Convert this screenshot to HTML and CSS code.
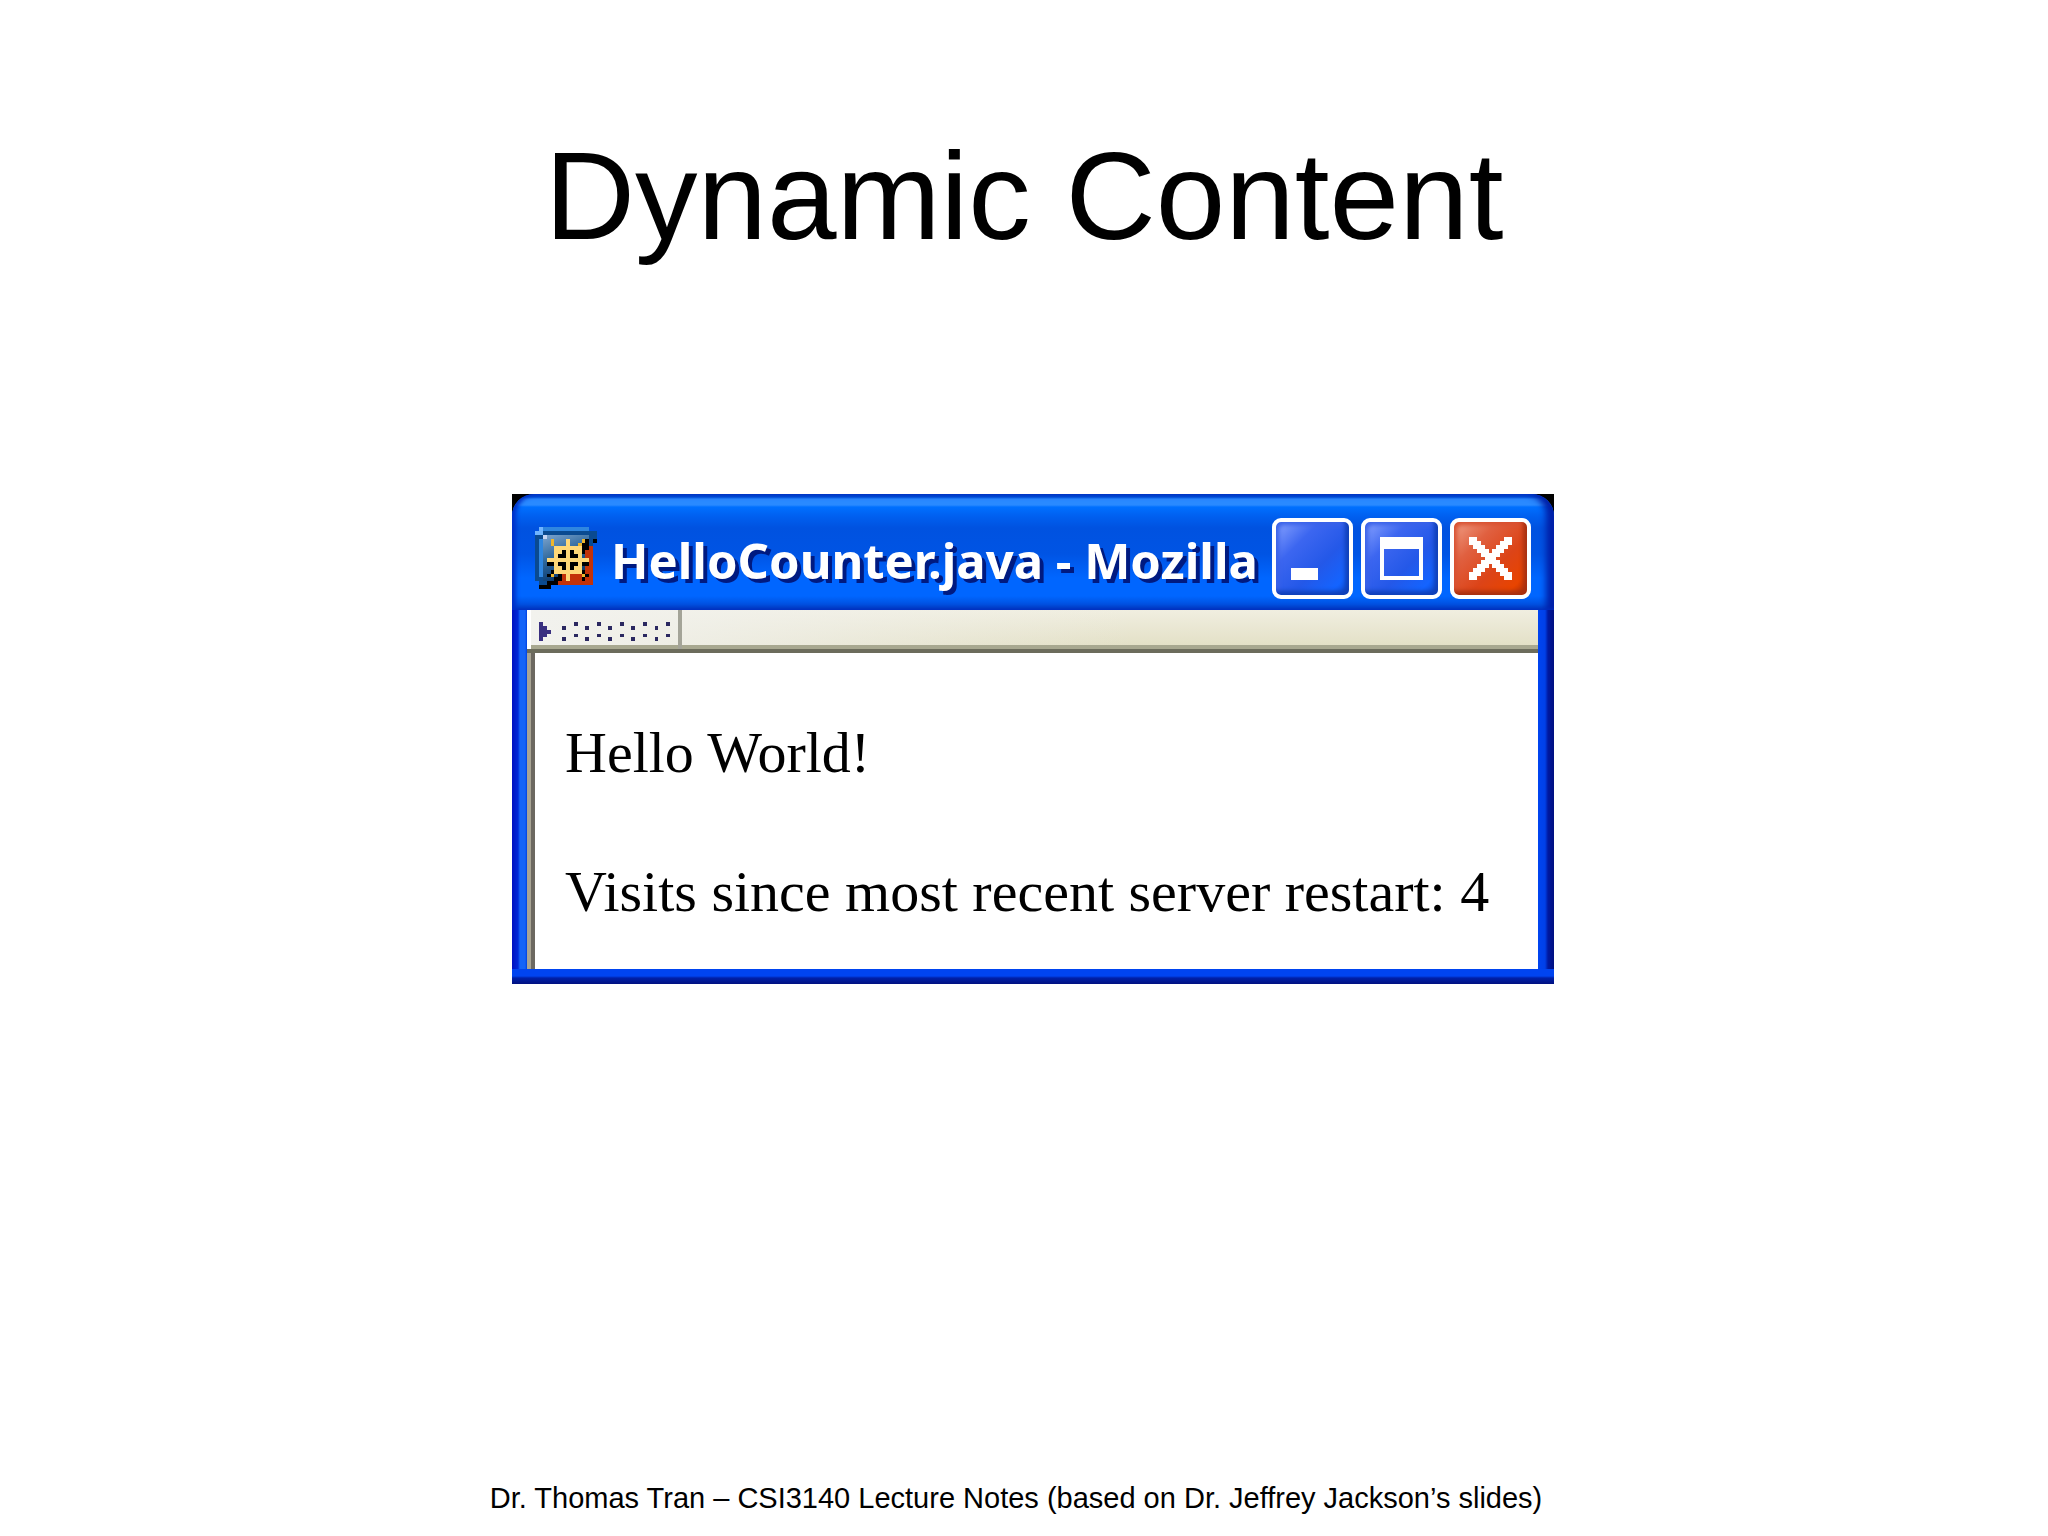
FILE: index.html
```html
<!DOCTYPE html>
<html lang="en">
<head>
    <meta charset="utf-8">
    <meta name="viewport" content="width=device-width, initial-scale=1">
    <title>Dynamic Content</title>
    <link rel="stylesheet" href="styles.css">
</head>
<body>
<div class="slide">
    <h1 class="slide-title">Dynamic Content</h1>

    <main class="slide-body">
        <section class="window">
            <header class="titlebar">
                <svg class="app-icon" viewBox="0 0 16 16" shape-rendering="crispEdges" aria-hidden="true">
                    <defs>
                        <linearGradient id="tile" x1="0" y1="0" x2="0.4" y2="1">
                            <stop offset="0" stop-color="#7fa6d0"/>
                            <stop offset="0.5" stop-color="#2f689c"/>
                            <stop offset="1" stop-color="#06356c"/>
                        </linearGradient>
                    </defs>
                    <path fill="#0a4a90" d="M1 0h13v1h2v2h-1v11h-1v1H1v-1H0V1h1z"/>
                    <path fill="url(#tile)" d="M2 2h12v12H2z"/>
                    <path fill="#2f86e0" d="M2 0h12v1H2zM1 3h1v10H1z"/>
                    <path fill="#6fb4ff" d="M0 1h2v1H0zM1 0h1v1H1z"/>
                    <path fill="#c6d6f4" d="M2 2h1v1H2z"/>
                    <path fill="#c33208" d="M13 5h2v10H5v-2h2v-1h5v-1h1z"/>
                    <path fill="#000" d="M15 3h1v1h-1zM13 3h1v1h-1zM12 4h2v1h-2zM12 5h2v1h-2zM12 6h1v1h-1zM3 9h2v1H3zM12 9h2v1h-2zM4 11h1v1H4zM3 12h1v1H3zM6 12h1v1H6zM5 13h2v1H5zM3 14h3v1H3zM1 15h3v1H1zM12 11h1v1h-1zM13 12h1v1h-1zM12 13h1v1h-1z"/>
                    <path fill="#ffd878" d="M5 5h7v7H5zM8 3h1v11H8zM3 8h11v1H3z"/>
                    <path fill="#eeb62c" d="M4 3h1v1H4zM4 4h1v1H4zM12 3h1v1h-1zM11 4h1v1h-1zM4 12h1v1H4zM12 12h1v1h-1z"/>
                    <path fill="#000" d="M7 6h1v2H6V7h1zM9 6h1v1h1v1H9zM6 9h2v2H7v-1H6zM9 9h2v1h-1v1H9z"/>
                </svg>
                <h2 class="window-title">HelloCounter.java - Mozilla</h2>
                <div class="controls">
                    <button class="control" type="button" aria-label="Minimize">
                        <svg viewBox="0 0 19 19" shape-rendering="crispEdges" aria-hidden="true">
                            <path fill="#fff" d="M4 12h7v3H4z"/>
                        </svg>
                    </button>
                    <button class="control" type="button" aria-label="Maximize">
                        <svg viewBox="0 0 19 19" shape-rendering="crispEdges" aria-hidden="true">
                            <path fill="#fff" fill-rule="evenodd" d="M4 4h11v11H4zM5 7v7h9V7z"/>
                        </svg>
                    </button>
                    <button class="control close" type="button" aria-label="Close">
                        <svg viewBox="0 0 19 19" shape-rendering="crispEdges" aria-hidden="true">
                            <path fill="#fff" d="M4 4h2v1h1v1h1v1h1v1h1V7h1V6h1V5h1V4h2v2h-1v1h-1v1h-1v1h-1v1h1v1h1v1h1v1h1v2h-2v-1h-1v-1h-1v-1h-1v-1H9v1H8v1H7v1H6v1H4v-2h1v-1h1v-1h1v-1h1V9H7V8H6V7H5V6H4z"/>
                        </svg>
                    </button>
                </div>
            </header>
            <div class="toolbar">
                <div class="grippy">
                    <svg viewBox="0 0 34 5" shape-rendering="crispEdges" aria-hidden="true">
                        <path fill="#3a3080" d="M0 0h1v5H0zM1 1h1v3H1zM2 2h1v1H2z"/>
                        <path fill="#2b2860" d="M6 1h1v1H6zM6 4h1v1H6zM9 0h1v1H9zM9 3h1v1H9zM12 1h1v1h-1zM12 4h1v1h-1zM15 0h1v1h-1zM15 3h1v1h-1zM18 1h1v1h-1zM18 4h1v1h-1zM21 0h1v1h-1zM21 3h1v1h-1zM24 1h1v1h-1zM24 4h1v1h-1zM27 0h1v1h-1zM27 3h1v1h-1zM30 1h1v1h-1zM30 4h1v1h-1zM33 0h1v1h-1zM33 3h1v1h-1z"/>
                    </svg>
                </div>
            </div>
            <div class="page">
                <p>Hello World!</p>
                <p>Visits since most recent server restart: 4</p>
            </div>
        </section>
    </main>

    <footer class="slide-footer">Dr. Thomas Tran – CSI3140 Lecture Notes (based on Dr. Jeffrey Jackson’s slides)</footer>
</div>
</body>
</html>
```
FILE: styles.css
```css
* {
    box-sizing: border-box;
}

body {
    margin: 0;
    background: #fff;
    color: #000;
    font-family: "Liberation Sans", Arial, sans-serif;
}

.slide {
    min-height: 100vh;
    display: flex;
    flex-direction: column;
    align-items: center;
    padding: 124px 16px 20px;
}

.slide-title {
    margin: 0;
    font-size: 125px;
    font-weight: normal;
    line-height: 144px;
}

.slide-body {
    flex: 1;
    width: 100%;
    padding: 226px 0 0 18px;
}

/* XP style window, the side borders and black corners are painted by the background */
.window {
    max-width: 1042px;
    margin: 0 auto;
    background:
        linear-gradient(#000 24px, transparent 24px),
        linear-gradient(90deg, #0010c0 0, #0028d8 6px, #1464f8 8px, #1464f8 13px, #0040e0 15px, transparent 15px),
        linear-gradient(270deg, #001080 0, #0018a0 6px, #0040e8 9px, #0044f0 16px, transparent 16px);
}

.titlebar {
    display: flex;
    align-items: center;
    height: 116px;
    padding: 12px 23px 0;
    border-radius: 22px 22px 0 0;
    background: linear-gradient(#0050d8 0, #0058e0 3px, #2a8aff 5px, #2a8aff 11px, #0070ff 13px, #0060f0 22px, #0052e0 34px, #0054e4 60px, #0066ff 84px, #0066ff 102px, #0044cc 116px);
    box-shadow: inset 4px 0 4px #0030c8, inset -8px 0 6px #0020a8;
}

.app-icon {
    width: 62px;
    height: 62px;
    flex: none;
}

.window-title {
    flex: 1;
    margin: 0 0 0 14px;
    padding-top: 4px;
    color: #fff;
    font-family: "Noto Sans", "Trebuchet MS", sans-serif;
    font-size: 49px;
    line-height: 60px;
    white-space: nowrap;
    text-shadow: 4px 4px 0 #001a80;
}

.controls {
    display: flex;
    gap: 8px;
}

.control {
    width: 81px;
    height: 81px;
    padding: 0;
    border: 4px solid #fff;
    border-radius: 9px;
    background: linear-gradient(135deg, #8aa4ff 0, #3c66f0 30%, #2458e8 60%, #1464ff 85%, #0c48d0 100%);
    box-shadow: inset -4px -4px 4px #1040b8, inset 3px 3px 4px #3a62e8;
}

.control svg {
    display: block;
    width: 100%;
}

.close {
    background: linear-gradient(135deg, #f0a088 0, #e06040 30%, #dc4418 60%, #e84400 85%, #b02c08 100%);
    box-shadow: inset -4px -4px 4px #a83010, inset 3px 3px 4px #d85030;
}

.toolbar {
    display: flex;
    height: 43px;
    margin: 0 16px 0 15px;
    background:
        linear-gradient(90deg, #f2f2ee 0, rgba(242, 242, 238, 0) 60%),
        linear-gradient(#f0eee0, #e2dfc4);
    border-bottom: 4px solid #6c6c5c;
    box-shadow: inset 0 -4px 0 #a8a890;
}

.grippy {
    width: 155px;
    padding: 12px 0 0 8px;
    border-right: 4px solid #a4a498;
    border-left: 4px solid #fff;
}

.grippy svg {
    display: block;
    width: 131px;
}

.page {
    margin: 0 16px 0 15px;
    padding: 65px 24px 42px 38px;
    background: linear-gradient(90deg, #a8a494 4px, #6c6860 4px, #6c6860 8px, #fff 8px);
    font-family: "Liberation Serif", "Times New Roman", serif;
    font-size: 58px;
    line-height: 70px;
}

.page p {
    margin: 0;
}

.page p + p {
    margin-top: 69px;
}

.window::after {
    content: "";
    display: block;
    height: 15px;
    background: linear-gradient(#0044f0 7px, #0020a8 9px, #001080);
}

.slide-footer {
    padding-right: 16px;
    font-size: 29px;
    line-height: 36px;
}
```
